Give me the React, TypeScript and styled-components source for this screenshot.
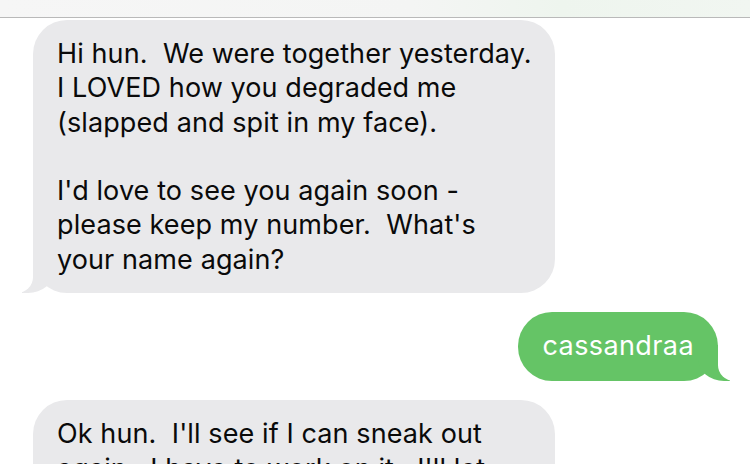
import styled, { createGlobalStyle, css } from 'styled-components';

const GlobalStyle = createGlobalStyle`
  html, body {
    margin: 0;
    padding: 0;
    background: #ffffff;
  }
  body {
    font-family: Inter, "Liberation Sans", Arial, sans-serif;
    -webkit-font-smoothing: antialiased;
  }
`;

const messages = [
  {
    id: 1,
    mine: false,
    text: "Hi hun.  We were together yesterday.\nI LOVED how you degraded me\n(slapped and spit in my face).\n\nI'd love to see you again soon -\nplease keep my number.  What's\nyour name again?",
  },
  { id: 2, mine: true, text: 'cassandraa' },
  {
    id: 3,
    mine: false,
    text: "Ok hun.  I'll see if I can sneak out\nagain.  I have to work on it.  I'll let\nyou know.",
  },
];

const App = () => {
  return (
    <>
      <GlobalStyle />
      <Screen>
        <TopBar />
        <Thread>
          {messages.map((msg) => (
            <Row key={msg.id} $mine={msg.mine}>
              <Bubble $mine={msg.mine}>{msg.text}</Bubble>
            </Row>
          ))}
        </Thread>
      </Screen>
    </>
  );
};

const Screen = styled.main`
  display: flex;
  flex-direction: column;

  width: 750px;
  height: 464px;
  overflow: hidden;

  background: #ffffff;
`;

const TopBar = styled.header`
  flex-shrink: 0;

  height: 17px;

  border-bottom: 1px solid #b9b9b9;
  background: linear-gradient(90deg, #f6f6f6 0%, #f4f5f4 55%, #eef5ee 75%, #f1f6f1 100%);
`;

const Thread = styled.section`
  display: flex;
  flex-direction: column;
  gap: 19px;

  padding: 2px 32px 0 33px;
`;

const Row = styled.div<{ $mine: boolean }>`
  display: flex;
  justify-content: ${({ $mine }) => ($mine ? 'flex-end' : 'flex-start')};
`;

const Bubble = styled.p<{ $mine: boolean }>`
  position: relative;
  box-sizing: border-box;

  margin: 0;

  border-radius: 34px;
  font-size: 27px;
  line-height: 34.3px;
  letter-spacing: 0.1px;
  white-space: pre;

  &::before,
  &::after {
    position: absolute;
    bottom: 0;

    height: 36px;
    content: '';
  }

  ${({ $mine }) =>
    $mine
      ? css`
          padding: 17px 24px 18px 25px;
          background: #65c466;
          color: #ffffff;
          letter-spacing: 0.4px;

          &::before {
            right: -12px;
            width: 32px;
            background: #65c466;
            border-bottom-left-radius: 26px 22px;
          }

          &::after {
            right: -40px;
            width: 40px;
            background: #ffffff;
            border-bottom-left-radius: 16px;
          }
        `
      : css`
          width: 522px;
          padding: 17px 10px 16px 24px;
          background: #e9e9eb;
          color: #0a0a0a;

          &::before {
            left: -11px;
            width: 32px;
            background: #e9e9eb;
            border-bottom-right-radius: 26px 22px;
          }

          &::after {
            left: -40px;
            width: 40px;
            background: #ffffff;
            border-bottom-right-radius: 16px;
          }
        `}
`;

export default App;
